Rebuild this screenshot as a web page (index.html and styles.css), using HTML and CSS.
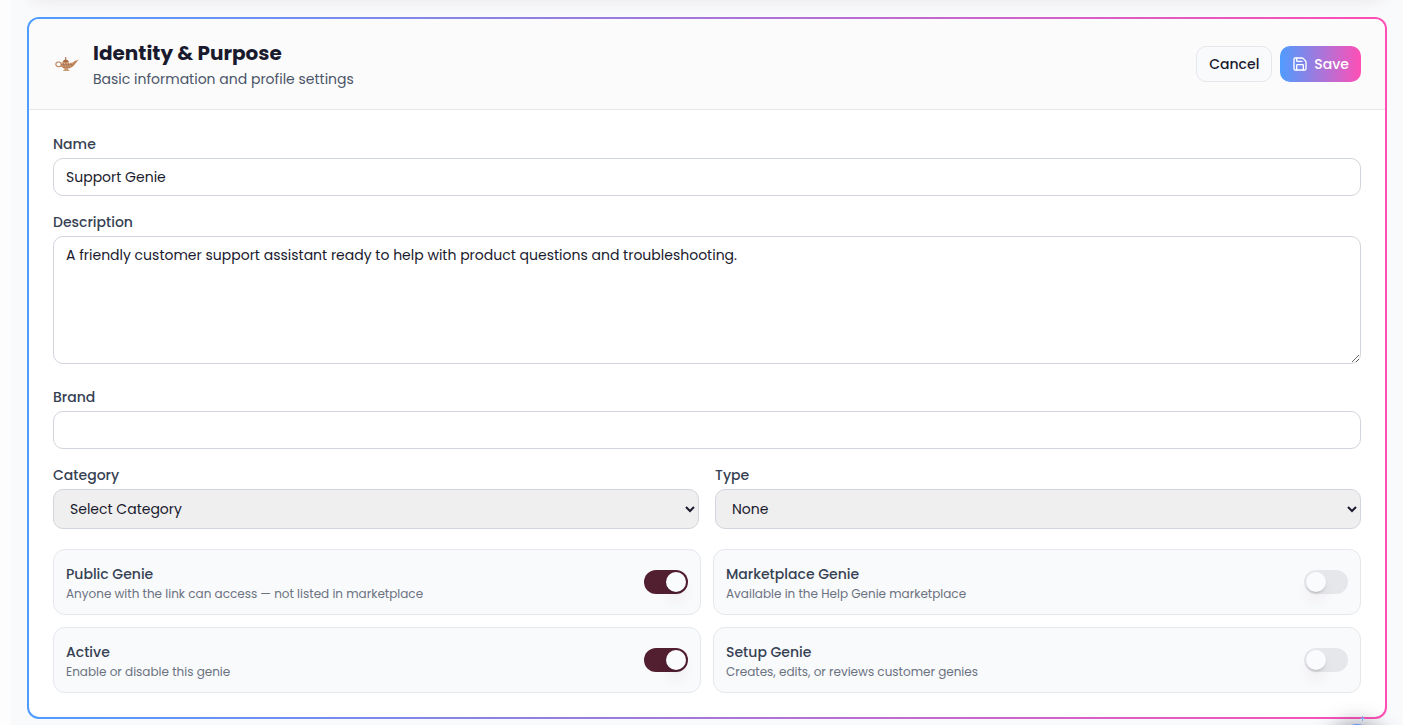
FILE: index.html
```html
<!doctype html>
<html lang="en">
<head>
    <meta charset="utf-8">
    <meta name="viewport" content="width=device-width">
    <title>Identity &amp; Purpose</title>
    <link rel="stylesheet" href="styles.css">
</head>
<body>

<main class="page">
    <div class="card-above"></div>

    <form class="card">
        <header class="card-header">
            <svg class="lamp" viewBox="0 0 24 24" aria-hidden="true">
                <path d="M6.500 13.500C4.500 15.500 1 15 .8 12.300C.8 9.800 4 9.300 6 11" fill="none" stroke="#b98560" stroke-width="1.200"/>
                <path d="M5.500 11Q10.500 8.800 15 11Q18 11 20 9L23.800 7.600Q22 9.500 20.500 11.500Q18 15.500 13.500 16.500H9Q5 14.500 5.500 11Z" fill="#bd8259"/>
                <path d="M7.500 10Q8 8.200 10.200 7.500V5h1v2.500Q13.500 8.200 14 10Z" fill="#a9683f"/>
                <path d="M9.500 16h3.500v1.500l2 1.500H7.500l2-1.500Z" fill="#c99a74"/>
                <path d="M6.500 11.500H18M7.500 14H16" stroke="#e3b995" stroke-width="1" stroke-dasharray="1 1.500"/>
                <path d="M8 12.800H17" stroke="#84706b" stroke-width="1" stroke-dasharray="1 1.500"/>
            </svg>
            <div class="heading">
                <h2 class="title">Identity &amp; Purpose</h2>
                <p class="subtitle">Basic information and profile settings</p>
            </div>
            <button type="button" class="btn">Cancel</button>
            <button type="submit" class="btn btn_save">
                <svg class="btn-icon" viewBox="0 0 24 24" aria-hidden="true">
                    <path d="M15.200 3a2 2 0 0 1 1.400.6l3.800 3.800a2 2 0 0 1 .6 1.400V19a2 2 0 0 1-2 2H5a2 2 0 0 1-2-2V5a2 2 0 0 1 2-2z"/>
                    <path d="M17 21v-7a1 1 0 0 0-1-1H8a1 1 0 0 0-1 1v7M7 3v4a1 1 0 0 0 1 1h7"/>
                </svg>
                Save
            </button>
        </header>

        <div class="card-body">
            <div class="field">
                <label for="name">Name</label>
                <input class="control" type="text" id="name" value="Support Genie">
            </div>
            <div class="field field_description">
                <label for="description">Description</label>
                <textarea class="control" id="description">A friendly customer support assistant ready to help with product questions and troubleshooting.</textarea>
            </div>
            <div class="field">
                <label for="brand">Brand</label>
                <input class="control" type="text" id="brand">
            </div>
            <div class="selects">
                <div class="field">
                    <label for="category">Category</label>
                    <select class="control" id="category"><option>Select Category</option></select>
                </div>
                <div class="field">
                    <label for="type">Type</label>
                    <select class="control" id="type"><option>None</option></select>
                </div>
            </div>

            <div class="toggles">
                <label class="toggle">
                    <span class="toggle-text">
                        <span class="toggle-name">Public Genie</span>
                        <span class="toggle-hint">Anyone with the link can access — not listed in marketplace</span>
                    </span>
                    <input class="switch" type="checkbox" checked>
                </label>
                <label class="toggle">
                    <span class="toggle-text">
                        <span class="toggle-name">Marketplace Genie</span>
                        <span class="toggle-hint">Available in the Help Genie marketplace</span>
                    </span>
                    <input class="switch" type="checkbox">
                </label>
                <label class="toggle">
                    <span class="toggle-text">
                        <span class="toggle-name">Active</span>
                        <span class="toggle-hint">Enable or disable this genie</span>
                    </span>
                    <input class="switch" type="checkbox" checked>
                </label>
                <label class="toggle">
                    <span class="toggle-text">
                        <span class="toggle-name">Setup Genie</span>
                        <span class="toggle-hint">Creates, edits, or reviews customer genies</span>
                    </span>
                    <input class="switch" type="checkbox">
                </label>
            </div>
        </div>
    </form>
</main>

<div class="helper">
    <svg class="helper-icon" viewBox="0 0 28 28" aria-hidden="true">
        <path d="M19.500 0v5M17.500 2.500h4" stroke="#7fa6ee" stroke-width="1"/>
        <ellipse cx="14" cy="17" rx="14" ry="9" fill="#5d8df5"/>
    </svg>
</div>

</body>
</html>
```

FILE: styles.css
```css
* {
    box-sizing: border-box;
}

html, body {
    margin: 0;
    padding: 0;
    color: #1a1a2e;
    background: #fdfdfe;
    font-family: Poppins, Inter, "Open Sans", sans-serif;
    font-size: 14px;
    line-height: 20px;
}

body {
    overflow: hidden;
}

.page {
    margin-left: 11px;
    padding: 0 16px 24px;
    background: #f9fafc;
    overflow: hidden;
}

.card-above {
    height: 40px;
    margin: -47px 0 24px;
    border-radius: 12px;
    box-shadow: 0 10px 15px -3px rgba(82,31,49,0.1), 0 4px 6px -4px rgba(82,31,49,0.1);
}

.card {
    border: 2px solid transparent;
    border-radius: 12px;
    background: linear-gradient(#fff, #fff) padding-box, linear-gradient(90deg, #4f9cff, #ff4fb5) border-box;
}

.card-header {
    display: flex;
    align-items: center;
    gap: 8px;
    padding: 20px 24px;
    border-bottom: 1px solid #e5e7eb;
    border-radius: 10px 10px 0 0;
    background: #fbfbfb;
}

.lamp {
    width: 24px;
    height: 24px;
    margin: 0 6px 0 2px;
}

.heading {
    flex: 1;
}

.title {
    margin: 0;
    font-size: 20px;
    font-weight: 700;
    line-height: 28px;
}

.subtitle {
    margin: 2px 0 0;
    color: #4a5568;
}

.btn {
    display: flex;
    align-items: center;
    gap: 6px;
    height: 36px;
    padding: 0 12px;
    border: 1px solid #e5e7eb;
    border-radius: 10px;
    color: #1a1a2e;
    background: #f9fafc;
    font: inherit;
    font-weight: 500;
    cursor: pointer;
}
    .btn_save {
        border: 0;
        color: #fff;
        background: linear-gradient(90deg, #4f9cff, #ff4fb5);
    }
    .btn-icon {
        width: 16px;
        height: 16px;
        fill: none;
        stroke: currentColor;
        stroke-width: 2;
        stroke-linecap: round;
        stroke-linejoin: round;
    }

.card-body {
    padding: 24px;
}

.field {
    display: flex;
    flex-direction: column;
    gap: 4px;
    flex: 1;
    margin-bottom: 16px;
    font-weight: 500;
    color: #364153;
}
    .field_description {
        margin-bottom: 23px;
    }

.control {
    width: 100%;
    height: 38px;
    padding: 8px 12px;
    border: 1px solid #d1d5dc;
    border-radius: 10px;
    color: #1a1a2e;
    background: #fff;
    font: inherit;
    font-weight: 400;
}
    textarea.control {
        display: block;
        height: 128px;
        resize: vertical;
    }
    select.control {
        height: 40px;
        background: #efefef;
    }

.selects {
    display: flex;
    gap: 16px;
    margin-bottom: 4px;
}

.toggles {
    display: grid;
    grid-template-columns: 1fr 1fr;
    gap: 12px;
}

.toggle {
    display: flex;
    align-items: center;
    justify-content: space-between;
    min-height: 66px;
    padding: 0 12px;
    border: 1px solid #e5e7eb;
    border-radius: 12px;
    background: #f9fafc;
    cursor: pointer;
}
    .toggle-text {
        padding-top: 4px;
    }
    .toggle-name {
        display: block;
        font-weight: 500;
        color: #364153;
    }
    .toggle-hint {
        display: block;
        font-size: 12px;
        color: #6b7280;
    }

.switch {
    appearance: none;
    display: flex;
    flex: none;
    width: 44px;
    height: 24px;
    margin: 0;
    padding: 2px;
    border-radius: 12px;
    background: #e5e7eb;
    cursor: pointer;
}
    .switch::before {
        content: "";
        width: 20px;
        height: 20px;
        border-radius: 50%;
        background: #fafbfd;
        box-shadow: 0 10px 15px -3px rgba(82,31,49,0.1), 0 2px 3px -1px rgba(0,0,0,0.2);
    }
    .switch:checked {
        justify-content: flex-end;
        background: #521f31;
    }

/* floating helper, peeks in from the bottom edge */
.helper {
    position: fixed;
    right: 18px;
    bottom: -56px;
    width: 56px;
    height: 56px;
    border-radius: 50%;
    box-shadow: 0 0 20px 2px rgba(60,60,80,0.5);
}
    .helper-icon {
        position: absolute;
        left: 14px;
        top: -9px;
        width: 28px;
        height: 28px;
    }
```
